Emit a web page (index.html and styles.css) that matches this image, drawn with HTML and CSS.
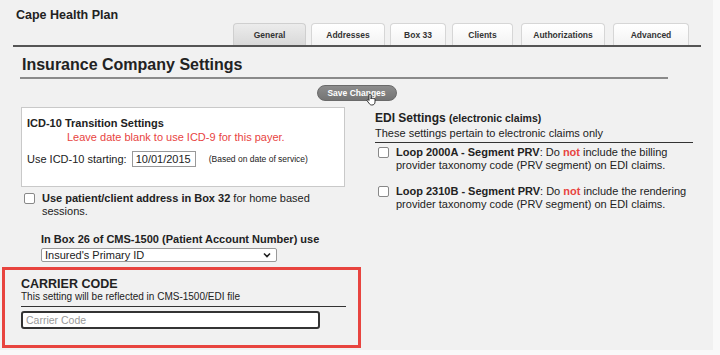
FILE: index.html
```html
<!DOCTYPE html>
<html lang="en">
<head>
  <meta charset="UTF-8" />
  <title>Cape Health Plan | Insurance Company Settings</title>
  <link rel="stylesheet" href="styles.css">
</head>
<body>
  <div class="page">
    <header class="top">
      <h1>Cape Health Plan</h1>
      <nav class="tabs">
        <a class="tab active">General</a>
        <a class="tab">Addresses</a>
        <a class="tab">Box 33</a>
        <a class="tab">Clients</a>
        <a class="tab">Authorizations</a>
        <a class="tab">Advanced</a>
      </nav>
    </header>

    <h2 class="page-title">Insurance Company Settings</h2>

    <div class="save-row">
      <button class="save-btn">Save Changes</button>
      <svg class="cursor" width="12" height="13" viewBox="0 0 12 13">
        <path d="M4 1.2c.6 0 1 .4 1 1V6l.3-.9c.5-.4 1.1-.1 1.2.4.4-.5 1.1-.3 1.3.3.5-.3 1.1 0 1.2.6V9c0 1.8-1.2 3-3 3H5.6c-1 0-1.7-.5-2.2-1.2L1.3 8c-.4-.5-.2-1.1.3-1.3.4-.2.9 0 1.2.3L3 7.4V2.2c0-.6.4-1 1-1z" fill="#fff" stroke="#222" stroke-width=".9"/>
      </svg>
    </div>

    <div class="cols">
      <section class="col-left">
        <div class="icd-box">
          <h3>ICD-10 Transition Settings</h3>
          <p class="warn">Leave date blank to use ICD-9 for this payer.</p>
          <div class="icd-row">
            <label>Use ICD-10 starting:</label>
            <input class="date-input" type="text" value="10/01/2015">
            <span class="hint">(Based on date of service)</span>
          </div>
        </div>

        <label class="check">
          <span class="box"></span>
          <span><b>Use patient/client address in Box 32</b> for home based sessions.</span>
        </label>

        <div class="box26">
          <p>In Box 26 of CMS-1500 (Patient Account Number) use</p>
          <div class="select">
            <span>Insured's Primary ID</span>
            <svg width="8" height="6" viewBox="0 0 8 6"><path d="M1 1.5l3 3 3-3" fill="none" stroke="#222" stroke-width="1.6"/></svg>
          </div>
        </div>

        <div class="carrier">
          <h3>CARRIER CODE</h3>
          <p class="sub">This setting will be reflected in CMS-1500/EDI file</p>
          <input class="carrier-input" type="text" placeholder="Carrier Code">
        </div>
      </section>

      <section class="col-right">
        <h3 class="edi-title">EDI Settings <small>(electronic claims)</small></h3>
        <p class="sub">These settings pertain to electronic claims only</p>

        <label class="check edi-check">
          <span class="box"></span>
          <span><b>Loop 2000A - Segment PRV</b>: Do <b class="red">not</b> include the billing provider taxonomy code (PRV segment) on EDI claims.</span>
        </label>
        <label class="check edi-check">
          <span class="box"></span>
          <span><b>Loop 2310B - Segment PRV</b>: Do <b class="red">not</b> include the rendering provider taxonomy code (PRV segment) on EDI claims.</span>
        </label>
      </section>
    </div>
  </div>
</body>
</html>
```

FILE: styles.css
```css
:root {
  --bg: #f1f1f1;
  --text: #222;
  --red: #e8443f;
  --line: #333;
}
*, *::before, *::after { box-sizing: border-box; margin: 0; padding: 0; }
body { background: #f9f9f9; color: var(--text); font-family: "Liberation Sans", Arial, sans-serif; }
.page { width: 713px; height: 350px; background: var(--bg); overflow: hidden; }

/* header + tabs */
.top { padding: 7px 0 0 16px; }
.top h1 { font-size: 12.5px; line-height: 16px; font-weight: bold; color: #222; }
.tabs { display: flex; justify-content: flex-end; gap: 5px; margin: 0 12px 0 -3px; padding-right: 12px; border-bottom: 2px solid #555; }
.tab { height: 22px; display: flex; align-items: center; justify-content: center; font-size: 8.5px; font-weight: bold; color: #333; border: 1px solid #d6d6d6; border-bottom: none; border-radius: 4px 4px 0 0; background: linear-gradient(#fff, #f3f3f3); }
.tab:nth-child(1) { width: 73px; }
.tab:nth-child(2) { width: 74px; }
.tab:nth-child(3) { width: 56px; }
.tab:nth-child(4) { width: 61px; margin-left: 1px; }
.tab:nth-child(5) { width: 84px; margin-left: 3px; }
.tab:nth-child(6) { width: 76px; margin-left: 3px; }
.tab.active { background: linear-gradient(#ececec, #d9d9d9); border-color: #cfcfcf; }

.page-title { margin: 8px 45px 0 20px; padding: 0 0 2px 2px; font-size: 16px; line-height: 20px; font-weight: bold; color: #222; border-bottom: 2px solid #8a8a8a; }

/* save */
.save-row { position: relative; display: flex; justify-content: center; margin-top: 6px; }
.save-btn { width: 80px; height: 16px; border: 1px solid #6a6a6a; border-radius: 8px; background: linear-gradient(#8c8c8c, #747474); color: #fff; font-family: inherit; font-size: 8.5px; font-weight: bold; }
.cursor { position: absolute; left: 366px; top: 8px; }

/* columns */
.cols { display: flex; gap: 30px; margin-top: 6px; padding: 0 20px 0 21px; }
.col-left { width: 324px; }
.col-right { flex: 1; padding-top: 4px; }

.icd-box { height: 80px; background: #fff; border: 1px solid #c9c9c9; padding: 9px 0 0 5px; }
.icd-box h3 { font-size: 11px; line-height: 12px; }
.warn { color: var(--red); font-size: 11px; line-height: 12px; margin: 2px 0 0 40px; }
.icd-row { display: flex; align-items: center; gap: 5px; margin-top: 8px; font-size: 11px; }
.date-input { width: 64px; height: 16px; border: 1px solid #999; font-family: inherit; font-size: 11px; padding: 0 3px; color: #222; }
.hint { font-size: 8.5px; margin-left: 8px; }

.check { display: flex; gap: 7px; font-size: 11px; line-height: 13px; }
.check .box { flex: 0 0 11px; height: 11px; margin-top: 1px; background: #fff; border: 1px solid #888; border-radius: 2px; }
.col-left .check { margin: 5px 20px 0 3px; }

.box26 { margin: 15px 0 0 20px; }
.box26 p { font-size: 11px; font-weight: bold; line-height: 12px; }
.select { display: flex; align-items: center; justify-content: space-between; width: 236px; height: 14px; margin-top: 3px; padding: 0 5px 0 3px; background: #fff; border: 1px solid #999; border-radius: 2px; font-size: 11px; }

.carrier { margin: 5px -16px 0 -19px; height: 81px; border: 3px solid var(--red); padding: 7px 12px 0 16px; }
.carrier h3 { font-size: 12.5px; line-height: 14px; }
.sub { font-size: 10px; line-height: 12px; padding-bottom: 3px; border-bottom: 1.5px solid var(--line); }
.carrier-input { display: block; width: 299px; height: 18px; margin-top: 4px; border: 2px solid #333; border-radius: 3px; padding: 0 3px; font-family: inherit; font-size: 10.5px; background: #fff; }
.carrier-input::placeholder { color: #999; }

.edi-title { font-size: 12px; line-height: 14px; }
.edi-title small { font-size: 10.5px; }
.col-right .sub { margin-top: 2px; font-size: 11px; }
.edi-check { margin: 3px 0 0 3px; }
.edi-check + .edi-check { margin-top: 13px; }
.red { color: var(--red); }
```
